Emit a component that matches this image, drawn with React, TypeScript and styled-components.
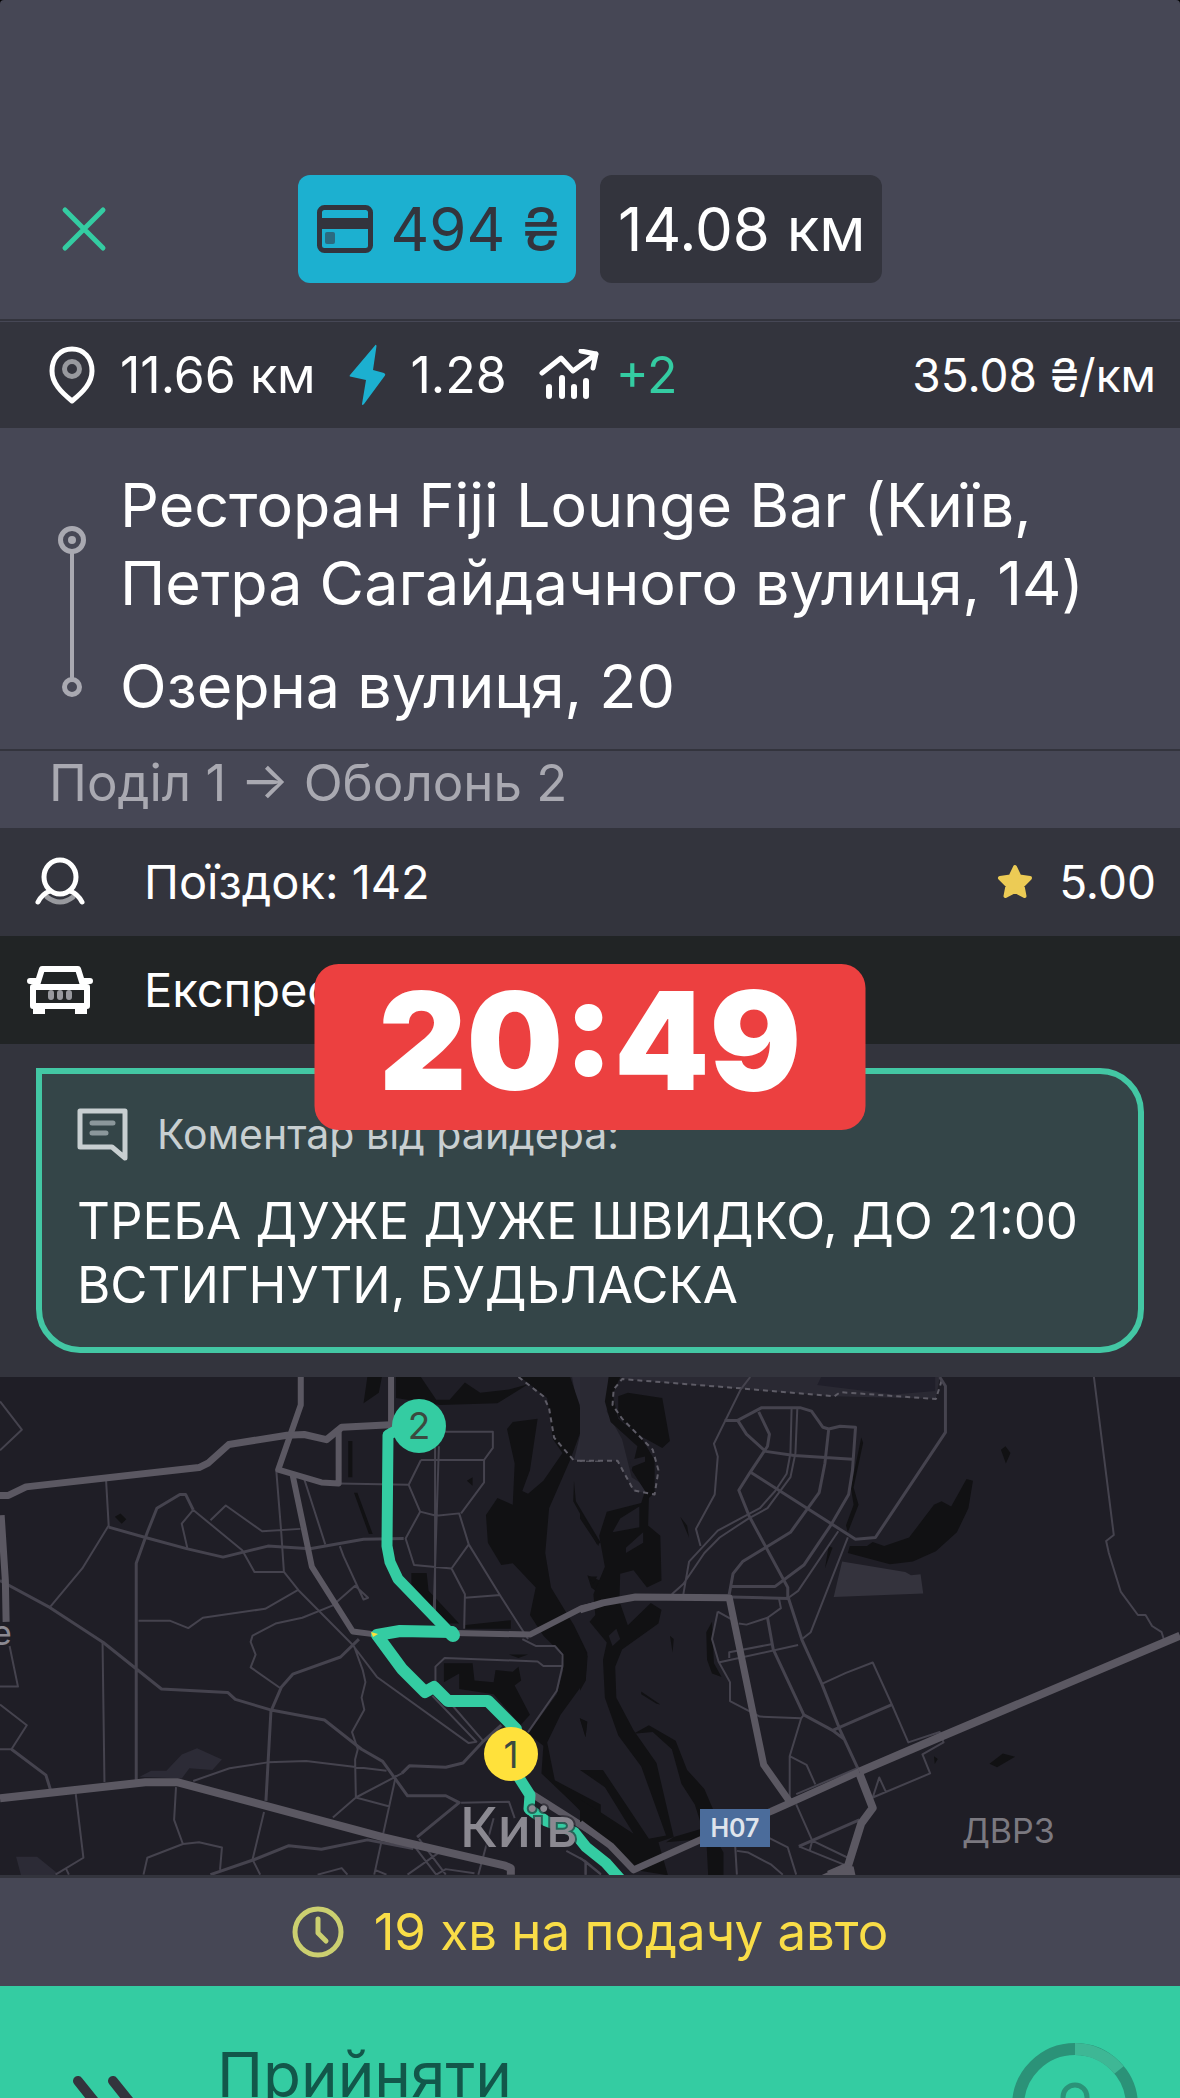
import React from 'react';
import styled, { createGlobalStyle } from 'styled-components';

const c = {
  panel: '#464755',
  dark: '#33343d',
  night: '#212425',
  teal: '#34cca2',
  blue: '#1cb0d0',
  yellow: '#ffe13b',
  muted: '#a9a9b1',
  red: '#ec4040',
};

const GlobalStyle = createGlobalStyle`
  * { box-sizing: border-box; }
  body { margin: 0; background: #000; }
  button { font: inherit; border: 0; padding: 0; background: none; cursor: pointer; }
  h1, p, ul { margin: 0; padding: 0; }
  ul { list-style: none; }
  svg { display: block; flex: none; }
`;

const Screen = styled.main`
  height: 100vh;
  display: flex;
  flex-direction: column;
  overflow: hidden;
  background: ${c.panel};
  border-radius: 4px 4px 0 0;
  color: #fff;
  font-family: Inter, 'Noto Sans', sans-serif;
  font-size: 47px;
  line-height: 56px;
  & > * { flex-shrink: 0; }
`;

const Header = styled.header`
  display: grid;
  grid-template-columns: 1fr auto 1fr;
  align-items: center;
  padding: 175px 60px 36px;
  border-bottom: 2px solid ${c.dark};
  margin-bottom: 1px;
`;

const CloseButton = styled.button`
  justify-self: start;
  color: ${c.teal};
`;

const Badges = styled.div`
  display: flex;
  gap: 24px;
`;

const Badge = styled.div<{ $pay?: boolean }>`
  display: flex;
  align-items: center;
  gap: 16px;
  height: 108px;
  padding: 0 16px 0 18px;
  border-radius: 12px;
  font-size: 60px;
  background: ${(p) => (p.$pay ? c.blue : c.dark)};
  color: ${(p) => (p.$pay ? c.dark : '#fff')};
`;

const Row = styled.section<{ $night?: boolean }>`
  display: flex;
  align-items: center;
  height: 108px;
  padding: 0 24px 0 26px;
  background: ${(p) => (p.$night ? c.night : c.dark)};
`;

const RowIcon = styled.span`
  display: flex;
  justify-content: center;
  width: 68px;
  margin-right: 50px;
`;

const Stats = styled(Row)`
  height: 106px;
  padding: 0 24px 0 48px;
  font-size: 50px;
`;

const Stat = styled.span<{ $gap: number }>`
  display: flex;
  align-items: center;
  gap: ${(p) => p.$gap}px;
  margin-right: 32px;
`;

const Gain = styled.span`
  color: ${c.teal};
`;

const Trailing = styled.span`
  display: flex;
  align-items: center;
  gap: 26px;
  margin-left: auto;
  font-size: 46px;
`;

const Addresses = styled.section`
  display: flex;
  align-items: flex-end;
  gap: 34px;
  padding: 38px 58px 24px;
  border-bottom: 2px solid ${c.dark};
  font-size: 61px;
  line-height: 78px;
`;

const AddressIcon = styled.div`
  padding-bottom: 27px;
`;

const AddressList = styled.ul`
  display: flex;
  flex-direction: column;
  gap: 25px;
`;

const Districts = styled.p`
  padding: 0 49px 13px;
  line-height: 64px;
  font-size: 51px;
  color: ${c.muted};
`;

const CommentArea = styled.section`
  position: relative;
  padding: 24px 36px 24px;
  background: ${c.dark};
`;

const Comment = styled.div`
  padding: 34px 35px 30px;
  border: 6px solid #43c7a4;
  border-radius: 0 44px 44px 44px;
  background: #344548;
  font-size: 51px;
  line-height: 64px;
`;

const CommentHead = styled.div`
  display: flex;
  align-items: center;
  gap: 28px;
  margin-bottom: 28px;
  font-size: 41px;
  line-height: 53px;
  color: #c8cfd1;
`;

const TimeSticker = styled.time`
  position: absolute;
  top: -80px;
  left: 50%;
  transform: translateX(-50%);
  width: 551px;
  height: 166px;
  border-radius: 24px;
  background: ${c.red};
  font-size: 136px;
  font-weight: 900;
  line-height: 154px;
  text-align: center;
`;

const MapView = styled.svg`
  width: 100%;
  height: auto;
  background: #1f1e26;
`;

const Line = styled.path<{ $w: number; $c: string }>`
  fill: none;
  stroke: ${(p) => p.$c};
  stroke-width: ${(p) => p.$w}px;
  stroke-linejoin: round;
  vector-effect: non-scaling-stroke;
`;

const Eta = styled.section`
  display: flex;
  align-items: center;
  justify-content: center;
  gap: 30px;
  height: 111px;
  border-top: 3px solid ${c.dark};
  font-size: 51px;
  color: #f9dd47;
`;

const Accept = styled.button`
  display: flex;
  align-items: center;
  height: 240px;
  padding: 0 42px 0 72px;
  background: ${c.teal};
  color: #12574a;
  font-size: 62px;
  line-height: 78px;
  text-align: left;
`;

const AcceptLabel = styled.span`
  flex: 1;
  align-self: flex-start;
  padding: 50px 0 0 81px;
`;

const MINOR = '#45434e';
const MAJOR = '#5b5862';

function CityMap() {
  return (
    <MapView viewBox="0 0 1180 498" role="img" aria-label="Маршрут на мапі">
      <g transform="scale(0.38265 0.34439) translate(0 -49)">
        <path fill="#2c2b36" d="M1495 49H1570V290H1500L1520 200ZM365 1210L395 1192H435L475 1145L515 1127L580 1160L555 1190L495 1185L475 1215ZM42 1442H97L150 1490L140 1496H55Z" />
        <path fill="#111113" d="M1360 49L1430 110L1445 230L1470 270L1420 350L1380 388L1365 380L1385 320L1405 170L1340 180L1325 200L1345 300L1340 420L1300 400L1270 450L1275 530L1310 595L1340 590L1400 660L1385 740L1420 800L1465 850L1472 900L1455 970L1380 1085L1420 1120L1415 1200L1500 1290L1570 1370V1290L1450 1220L1430 1110L1465 1030L1530 930L1535 850L1500 770L1440 660L1425 560L1435 430L1490 290L1520 200L1515 130L1490 49ZM1035 49H1100L1140 115H1175L1215 65L1255 95L1330 85L1380 70L1300 125L1150 130L1035 110ZM960 49H998L990 95L950 125ZM1160 880H1235L1240 930L1290 935L1295 900L1340 905L1355 890L1362 930L1345 945L1385 1030L1360 1060L1290 970L1200 955V910L1160 935ZM1075 618H1115L1120 670L1200 765H1165L1075 650ZM1210 770L1335 755V780H1210ZM300 455L315 445L330 462L318 475ZM1220 350L1235 340V365ZM910 235H921V340H910ZM925 385H934L974 505H964ZM1500 350L1505 410L1570 530L1560 535L1498 410ZM1535 625L1568 640V680L1545 660ZM1515 1040L1535 1050L1530 1095ZM1530 850H1570ZM1330 855H1380L1355 865Z" />
        <Line $w={2} $c="#5e5c66" strokeDasharray="5 4" d="M1355 49L1420 105L1435 140L1448 225L1500 292H1568" />
        <Line $w={2} $c={MINOR} d="M0 120L57 202L0 262M277 345L284 480L215 605L130 718M505 435L475 475L490 548M505 435L633 552L665 615H742L780 668L920 825L985 920L1225 1112L1245 1108L1130 975M1180 1000L1262 1105M550 465L590 422L685 497L785 490M722 320L735 500L742 615M795 345L850 535M268 820L273 1225M362 757H445L492 778L530 748L693 722L778 668M888 540L898 570L950 695L962 690L928 655L870 712L790 748L720 765L660 800L655 818L668 855L655 892L732 952M925 830L948 900L955 935L945 980L952 1015L920 1080L935 1130L928 1160L930 1270L1018 1296M505 1222L600 1185L700 1168L800 1164L1010 1192M870 1328L930 1270L1050 1200M1035 1205L978 1494M460 1240L455 1335L478 1405L385 1445L375 1494M478 1405L520 1400L580 1415L575 1480M690 1312L660 1450L680 1494M198 1260L218 1445L145 1494M172 1475L180 1494M0 1000L70 1060L30 1130H0M25 830L47 948H0M1100 290H1265L1288 255V208H1160M1100 290L1068 362L1098 440L1060 518L1082 595L1180 605L1225 535L1200 445L1140 452L1098 440M1265 290V355L1205 445M1225 535L1308 685L1380 810M1180 605L1215 680L1213 780M1215 690L1308 682M885 358L1068 362M1137 230V740M1147 250L1133 740M1365 810L1400 830H1450L1470 855V888H1420L1405 875L1162 865L1138 890V940M1470 888L1455 960L1380 1080M1205 1285L1330 1282L1345 1330M1250 1494L1290 1330M830 1494L893 1475L908 1494M980 1480L1010 1494M1065 1494L1160 1420M1075 1400L1140 1494M1095 1390L1165 1494M1140 1494L1165 1478L1240 1490M1480 1425L1530 1455V1494M1530 1455L1568 1490" />
        <Line $w={3} $c={MINOR} d="M284 485L380 515L490 548L583 572L700 540L810 548L950 520L1055 518M356 1225V590L385 500L410 430L470 390L485 390L505 435M0 640L130 718L270 820L422 955L595 965L615 985L705 1015L848 1045L945 1130L1000 1165L1065 1265H1165L1200 1285L1090 1385M938 810L890 862L765 912L735 950L708 1020L695 1280M1050 1200L1070 1178L1165 1182L1210 1170L1260 1110L1310 1060M550 1494L665 1450L755 1410L840 1420L960 1393L1080 1418M30 1130L120 1205L132 1248" />
        <Line $w={6} $c={MAJOR} d="M786 49V130L727 318L840 355L885 358V200M765 335L815 600L922 788L985 797L1100 790L1385 797L1520 720L1568 708M1022 49V200" />
        <Line $w={7} $c={MAJOR} d="M0 393H22L68 368L520 312L545 298L598 245L750 218L795 216L853 231L893 195L1020 188M3 450L14 640L16 760M1390 1260L1568 1385" />
        <Line $w={8} $c={MAJOR} d="M0 1272L380 1226H465L1000 1385L1320 1468L1335 1475V1494" />
      </g>
      <g transform="translate(580 0) scale(0.38265 0.34439) translate(0 -49)">
        <path fill="#2a2933" d="M0 49H75L70 150L110 230L135 340L190 380L195 390L140 380L98 292H0ZM110 49H940L930 112L660 105L110 55Z" />
        <path fill="#34333d" d="M685 585L850 615L865 625L890 622L897 678L663 688Z" />
        <path fill="#201f2a" d="M630 49H928V90L820 100L620 72Z" />
        <path fill="#111113" d="M75 49H105L85 100L100 170L160 225L195 290V385L180 400L178 480L210 510L213 640L175 660L140 610L105 620L103 700L125 770L185 705L213 725L205 765L110 840L92 890L95 980L140 1075L200 1170L245 1385L205 1400L230 1496L140 1480L80 1410L0 1340V1275L50 1310L140 1375L65 1240L0 1190H60L180 1390L225 1380L160 1180L100 1090L65 980L60 870L70 820L25 760L40 740L35 680L65 600L50 510L70 440L160 415L170 380L135 320L150 250L80 180L65 120ZM100 105L125 95L215 110L235 235L215 255L150 215L100 165ZM140 1085L180 1060L250 1105L280 1190L325 1245L350 1310L345 1370L375 1430V1496H335L330 1390L225 1400L245 1385L320 1360L300 1290L265 1230L240 1130L190 1080ZM1010 345L1027 350L1015 430L985 500L930 555L870 585L810 593L700 560L705 540H750L765 528L795 540L860 515L925 420L945 410L970 425ZM735 225L740 240L715 370L728 420L700 500L695 480L715 420L708 370ZM330 790L345 760L350 880L370 920L345 910L332 870ZM1100 260L1112 250L1125 270L1113 300ZM1070 1172L1105 1142L1137 1152L1090 1182ZM925 1150L935 1158L927 1173ZM160 962L210 1000L200 998L160 970ZM0 810L20 860L15 930L0 960ZM235 800L245 810L242 850ZM262 455L280 480L285 515ZM0 1040L18 1050L15 1095ZM22 628H45L35 650ZM0 435L50 530L48 540L0 460ZM650 540L660 545L640 605Z" />
        <path fill="#1f1e26" d="M105 460L155 425V485L85 500ZM120 545L165 500V530L120 560ZM130 290L170 280V295L135 310ZM75 800L95 780L105 810L85 830Z" />
        <Line $w={2} $c="#5e5c66" strokeDasharray="5 4" d="M0 292H98L140 378L195 390L205 320L190 260L110 170L85 130L88 85L110 55L420 82L665 105L680 93L930 113L945 60" />
        <Line $w={2} $c={MINOR} d="M445 49L420 85L350 243L360 280L352 390L303 490L315 540M553 138L550 270L540 330L510 380L470 430L360 495L285 585L270 680M568 138L563 270L550 340L490 430L440 460L365 515L325 560L270 650L240 680M675 497L570 670L545 690M700 515L603 790L578 812M520 692L525 720L490 748L435 768L415 765M360 730L345 810L362 875L392 935V990L470 1035L578 1040L585 1030M360 730L395 752M362 878L570 827M390 865V848L500 825M632 940L695 908L765 878L815 1000L858 1110L940 1080L950 1110L895 1145L915 1200L765 1270L782 1212L800 1255M578 1040L548 1150V1280M548 1150L592 1175L615 1232M565 1260L725 1185M565 1290L607 1395L600 1425M572 1412L690 1465M607 1395L700 1445M1343 49L1395 508L1375 525L1382 560L1413 672L1458 740H1478L1495 772L1520 790L1527 815M405 1400L410 1494M410 1425L440 1430L500 1465L530 1494M490 1385L543 1415L565 1494M0 1445L55 1494M15 1460V1494" />
        <Line $w={3} $c={MINOR} d="M378 175H412L475 138H575L605 148L635 195L650 200L680 192L720 195L712 320L702 390L655 480L585 595L510 657H392M467 150L495 215L490 250L445 325L415 378L443 455L543 660V690M412 175L435 215L485 265L560 277L712 288M445 325L720 520L772 515L955 210V75L940 49M650 200L640 300L625 385L550 500L425 585L400 620L390 680M392 688L545 692L580 812L632 940L680 1075L730 1195M490 748L505 840L585 1030L660 1075L690 1100M660 1075L815 1000M730 1335L572 1412" />
        <Line $w={7} $c={MAJOR} d="M0 725L60 705L145 688L390 690L480 1175L550 1285M0 1345L80 1410L140 1480L320 1390L500 1310L560 1280L730 1195" />
        <Line $w={8} $c={MAJOR} d="M730 1195L940 1095L1568 800M730 1200L765 1300L735 1345L700 1470L650 1494" />
        <path fill={MAJOR} d="M630 1496L690 1465L715 1470L720 1496Z" />
      </g>
      <g strokeLinecap="round">
        <Line $w={11} $c={c.teal} d="M408 47L388 58L387 169L390 185L398 202L452 258" />
        <Line $w={12} $c={c.teal} d="M452 255L400 254L377 258L402 292L425 315L434 310L448 324H488L516 352" />
        <Line $w={11} $c={c.teal} d="M516 396L530 418L529 432L546 444L574 455L586 470L596 478L606 486L622 504" />
        <Line $w={14} $c={c.teal} d="M451 256L453 258" />
      </g>
      <path fill={c.yellow} d="M371 255L378 257L373 260Z" />
      <circle cx="419" cy="49" r="27" fill={c.teal} />
      <circle cx="511" cy="377" r="27" fill={c.yellow} />
      <g fill="#3b4a40" fontSize="37" textAnchor="middle">
        <text x="419" y="62">2</text>
        <text x="511" y="391">1</text>
      </g>
      <text x="460" y="470" fontSize="55" fontWeight="500" fill="#8b8991" stroke="#1f1e26" strokeOpacity="0.6" strokeWidth="4" paintOrder="stroke">Київ</text>
      <rect x="700" y="432" width="70" height="38" fill="#4b6c9b" />
      <text x="735" y="460" fontSize="25" fontWeight="600" fill="#dfe4ec" textAnchor="middle">H07</text>
      <text x="962" y="466" fontSize="34" fill="#7b7980">ДВРЗ</text>
      <text x="-8" y="268" fontSize="34" fill="#8b8991">е</text>
    </MapView>
  );
}

export default function App() {
  return (
    <>
      <GlobalStyle />
      <Screen>
        <Header>
          <CloseButton type="button" aria-label="Закрити">
            <svg width="48" height="48" viewBox="0 0 48 48" fill="none" stroke="currentColor" strokeWidth="5" strokeLinecap="round">
              <path d="M5 5L43 43M43 5L5 43" />
            </svg>
          </CloseButton>
          <Badges>
            <Badge $pay>
              <svg width="58" height="50" viewBox="0 0 58 50" fill="none">
                <rect x="3.5" y="3.5" width="51" height="43" rx="5" stroke={c.dark} strokeWidth="5" />
                <path fill={c.dark} d="M2 14H56V25H2Z" />
                <rect x="9" y="28" width="10" height="12" rx="2" fill="#2b6b80" />
              </svg>
              494 ₴
            </Badge>
            <Badge>14.08 км</Badge>
          </Badges>
        </Header>

        <Stats>
          <Stat $gap={24}>
            <svg width="48" height="60" viewBox="0 0 48 60" fill="none">
              <path d="M24 4C12 4 4 13 4 26C4 38 13 47 24 56C35 47 44 38 44 26C44 13 36 4 24 4Z" stroke="#fff" strokeWidth="5" strokeLinejoin="round" />
              <circle cx="24" cy="24" r="7.5" stroke="#98999e" strokeWidth="5" />
            </svg>
            11.66 км
          </Stat>
          <Stat $gap={23}>
            <svg width="40" height="62" viewBox="0 0 40 62">
              <path fill={c.blue} d="M28 1.5Q29 0 29.5 2L26 26L37 29Q39 30 38 31.5L17 60Q15 62 15 60L19 36L3 32.5Q2 32 3 31Z" />
            </svg>
            1.28
          </Stat>
          <Stat $gap={17}>
            <svg width="60" height="52" viewBox="0 0 60 52" fill="none" stroke="#fff" strokeWidth="5" strokeLinecap="round" strokeLinejoin="round">
              <path d="M3 24L22 9L34 22L57 5M42 2L57 5L54 19" />
              <path strokeWidth="6" d="M10 38V47M23 29V47M35 38V47M47 32V47" />
            </svg>
            <Gain>+2</Gain>
          </Stat>
          <Trailing>35.08 ₴/км</Trailing>
        </Stats>

        <Addresses>
          <AddressIcon>
            <svg width="28" height="172" viewBox="0 0 28 172" fill="none" stroke={c.muted}>
              <circle cx="14" cy="14" r="11.5" strokeWidth="5" />
              <circle cx="14" cy="14" r="4" fill={c.muted} stroke="none" />
              <path strokeWidth="4" d="M14 27V152" />
              <circle cx="14" cy="161" r="7.5" strokeWidth="5" />
            </svg>
          </AddressIcon>
          <AddressList>
            <li>Ресторан Fiji Lounge Bar (Київ,<br />Петра Сагайдачного вулиця, 14)</li>
            <li>Озерна вулиця, 20</li>
          </AddressList>
        </Addresses>
        <Districts>Поділ 1 → Оболонь 2</Districts>

        <Row>
          <RowIcon>
            <svg width="52" height="50" viewBox="0 0 52 50" fill="none" strokeLinecap="round">
              <path d="M13 40Q26 50 39 40" stroke="#98999e" strokeWidth="5" />
              <ellipse cx="26" cy="20" rx="16" ry="17" stroke="#fff" strokeWidth="5" />
              <path d="M16 34Q8 37 4 45M36 34Q44 37 48 45" stroke="#fff" strokeWidth="5" />
            </svg>
          </RowIcon>
          Поїздок: 142
          <Trailing>
            <svg width="36" height="36" viewBox="0 0 36 36">
              <path fill="#eccb55" stroke="#eccb55" strokeWidth="4" strokeLinejoin="round" d="M18 3L22.5 12.5L33 14L25.5 21.5L27.5 32L18 27L8.5 32L10.5 21.5L3 14L13.5 12.5Z" />
            </svg>
            5.00
          </Trailing>
        </Row>
        <Row $night>
          <RowIcon>
            <svg width="66" height="50" viewBox="0 0 66 50" fill="none" strokeLinejoin="round" strokeLinecap="round">
              <path d="M10 20L15 4H51L56 20M6 22H60V41H6ZM3 16H10M56 16H63" stroke="#fff" strokeWidth="6" />
              <path d="M24 28V32M33 28V32M42 28V32" stroke="#98999e" strokeWidth="6" />
              <path d="M12 43V49M54 43V49" stroke="#fff" strokeWidth="12" strokeLinecap="butt" />
            </svg>
          </RowIcon>
          Експрес
        </Row>

        <CommentArea>
          <Comment>
            <CommentHead>
              <svg width="52" height="53" viewBox="0 0 52 53" fill="none" stroke="#c8cfd1" strokeWidth="5" strokeLinejoin="round">
                <path d="M3 3H48V50L35 39H3Z" />
                <path d="M15 15H36M15 25H29" stroke="#8b979b" strokeLinecap="round" />
              </svg>
              Коментар від райдера:
            </CommentHead>
            <p>ТРЕБА ДУЖЕ ДУЖЕ ШВИДКО, ДО 21:00<br />ВСТИГНУТИ, БУДЬЛАСКА</p>
          </Comment>
          <TimeSticker>20:49</TimeSticker>
        </CommentArea>

        <CityMap />

        <Eta>
          <svg width="52" height="52" viewBox="0 0 52 52" fill="none" stroke="#cbcf70" strokeWidth="5" strokeLinecap="round" strokeLinejoin="round">
            <circle cx="26" cy="26" r="23" />
            <path d="M26 13V27L34 35" />
          </svg>
          19 хв на подачу авто
        </Eta>
        <Accept type="button">
          <svg width="64" height="64" viewBox="0 0 64 64" fill="none" stroke={c.dark} strokeWidth="10" strokeLinecap="round" strokeLinejoin="round">
            <path d="M6 7L26 32L6 57M41 7L61 32L41 57" />
          </svg>
          <AcceptLabel>Прийняти</AcceptLabel>
          <svg width="126" height="126" viewBox="0 0 126 126" fill="none" strokeWidth="12">
            <circle cx="63" cy="63" r="57" stroke="#2b9278" />
            <path d="M63 6A57 57 0 0 1 107 27" stroke="#3eb795" />
            <path d="M51 64V54A12 12 0 0 1 75 54V64M46 64H80V88H46Z" stroke="#2b9278" strokeWidth="5" />
          </svg>
        </Accept>
      </Screen>
    </>
  );
}
